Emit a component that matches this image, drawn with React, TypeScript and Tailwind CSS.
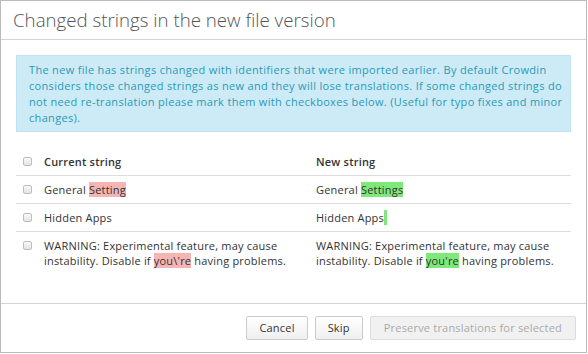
import React from 'react';

const rows = [
  {
    current: <>General <span className="bg-[#f5b5b5]">Setting</span></>,
    next: <>General <span className="bg-[#7fe87a]">Settings</span></>,
  },
  {
    current: <>Hidden Apps</>,
    next: <>Hidden Apps<span className="bg-[#7fe87a]">&nbsp;</span></>,
  },
  {
    current: (
      <>
        WARNING: Experimental feature, may cause instability. Disable if{' '}
        <span className="bg-[#f5b5b5]">you\'re</span> having problems.
      </>
    ),
    next: (
      <>
        WARNING: Experimental feature, may cause instability. Disable if{' '}
        <span className="bg-[#7fe87a]">you're</span> having problems.
      </>
    ),
  },
];

const Check: React.FC = () => (
  <span className="mt-[3px] inline-block h-[9px] w-[9px] shrink-0 rounded-[2px] border border-[#bdbdbd] bg-gradient-to-b from-[#fafafa] to-[#e4e4e4]" />
);

const App: React.FC = () => {
  return (
    <div className="h-[354px] w-[588px] bg-white font-['Open_Sans',sans-serif] text-[#333]">
      <div className="flex h-[353px] w-[587px] flex-col border border-[#bbb]">
        {/* Header */}
        <div className="flex h-[39px] items-center border-b border-[#d5d5d5] px-3">
          <h1 className="text-[18.7px] font-light text-[#555]">Changed strings in the new file version</h1>
        </div>

        {/* Body */}
        <div className="flex-1 px-[15px] pt-[15px]">
          <div className="whitespace-nowrap border border-[#bfe3f1] bg-[#cdebf6] pb-[5px] pl-3 pr-2 pt-[6px] text-[11px] leading-[16px] tracking-[0.32px] text-[#2b9ab8]">
            The new file has strings changed with identifiers that were imported earlier. By default Crowdin
            <br />
            considers those changed strings as new and they will lose translations. If some changed strings do
            <br />
            not need re-translation please mark them with checkboxes below. (Useful for typo fixes and minor
            <br />
            changes).
          </div>

          <div className="mt-[22px] text-[11px] leading-[15px] tracking-[0.2px]">
            <div className="flex border-b border-[#ddd] pb-[6px]">
              <div className="flex w-[300px] gap-[12px] pl-[7px]">
                <Check />
                <span className="font-semibold">Current string</span>
              </div>
              <div className="flex-1 font-semibold">New string</div>
            </div>
            {rows.map((r, i) => (
              <div
                key={i}
                className={`flex pb-[6px] pt-[6px] ${i < rows.length - 1 ? 'border-b border-[#ddd]' : ''}`}
              >
                <div className="flex w-[300px] gap-[12px] pl-[7px] pr-[6px]">
                  <Check />
                  <span>{r.current}</span>
                </div>
                <div className="flex-1 pr-[6px]">{r.next}</div>
              </div>
            ))}
          </div>
        </div>

        {/* Footer */}
        <div className="flex h-[49px] items-center justify-end gap-[7px] border-t border-[#d5d5d5] pr-[10px] text-[11px] tracking-[0.2px]">
          <button className="h-[24px] rounded-[2px] border border-[#ccc] bg-gradient-to-b from-white to-[#efefef] px-[12px] text-[#333]">
            Cancel
          </button>
          <button className="h-[24px] rounded-[2px] border border-[#ccc] bg-gradient-to-b from-white to-[#efefef] px-[12px] text-[#333]">
            Skip
          </button>
          <button className="h-[24px] rounded-[2px] border border-[#ddd] bg-[#f1f1f1] px-[13px] text-[#aaa]">
            Preserve translations for selected
          </button>
        </div>
      </div>
    </div>
  );
};

export default App;
